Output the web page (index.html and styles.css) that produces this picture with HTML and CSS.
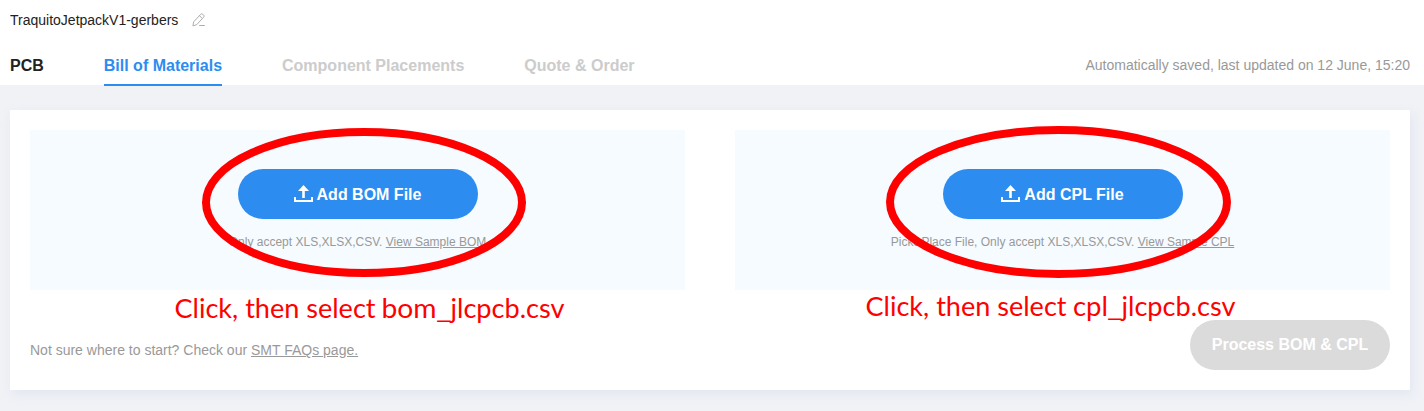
FILE: index.html
```html
<!DOCTYPE html>
<html lang="en">
<head>
<meta charset="utf-8">
<title>Bill of Materials</title>
<link rel="stylesheet" href="styles.css">
</head>
<body>
<header class="header">
  <div class="project">
    <span>TraquitoJetpackV1-gerbers</span>
    <svg class="edit-icon" width="14" height="14" viewBox="0 0 14 14" fill="none" stroke="#adadad"><path d="M.9 12.9l.8-4.1L8.7 1.3a1.5 1.5 0 0 1 2.1 0l.8.8a1.5 1.5 0 0 1 0 2.1L4.7 11.7zM7.5 2.7l2.9 2.9M7.2 12.5h5.6"/></svg>
  </div>
  <nav class="tabs">
    <a class="tab">PCB</a>
    <a class="tab tab-active">Bill of Materials</a>
    <a class="tab tab-disabled">Component Placements</a>
    <a class="tab tab-disabled">Quote &amp; Order</a>
    <span class="saved">Automatically saved, last updated on 12 June, 15:20</span>
  </nav>
</header>
<main class="card">
  <div class="uploads">
    <section class="upload">
      <button class="btn upload-btn"><svg width="19" height="17" viewBox="0 0 19 17"><path fill="#fff" d="M9.5 0L15 6h-4.2v7H8.2V6H4zM0 12h2v3h15v-3h2v5H0z"/></svg>Add BOM File</button>
      <p class="hint">Only accept XLS,XLSX,CSV. <a class="link">View Sample BOM</a></p>
    </section>
    <section class="upload">
      <button class="btn upload-btn"><svg width="19" height="17" viewBox="0 0 19 17"><path fill="#fff" d="M9.5 0L15 6h-4.2v7H8.2V6H4zM0 12h2v3h15v-3h2v5H0z"/></svg>Add CPL File</button>
      <p class="hint">Pick&amp;Place File, Only accept XLS,XLSX,CSV. <a class="link">View Sample CPL</a></p>
    </section>
  </div>
  <footer class="footer">
    <p class="faq">Not sure where to start? Check our <a class="link">SMT FAQs page.</a></p>
    <button class="btn process-btn">Process BOM &amp; CPL</button>
  </footer>
</main>
<svg class="notes" width="1424" height="411" viewBox="0 0 1424 411">
  <ellipse class="ring" cx="364" cy="202.5" rx="158" ry="70.5"/>
  <ellipse class="ring" cx="1058.5" cy="202" rx="168.5" ry="72"/>
  <g class="note">
    <text x="174.5" y="318" textLength="201" lengthAdjust="spacingAndGlyphs">Click, then select</text>
    <text x="381.5" y="318" textLength="55" lengthAdjust="spacingAndGlyphs">bom</text>
    <text x="436" y="318" textLength="16" lengthAdjust="spacingAndGlyphs">_</text>
    <text x="450.5" y="318" textLength="114" lengthAdjust="spacingAndGlyphs">jlcpcb.csv</text>
    <text x="865.5" y="316" textLength="201" lengthAdjust="spacingAndGlyphs">Click, then select</text>
    <text x="1073" y="316" textLength="35" lengthAdjust="spacingAndGlyphs">cpl</text>
    <text x="1107" y="316" textLength="16" lengthAdjust="spacingAndGlyphs">_</text>
    <text x="1121.5" y="316" textLength="114" lengthAdjust="spacingAndGlyphs">jlcpcb.csv</text>
  </g>
</svg>
</body>
</html>
```
FILE: styles.css
```css
* { box-sizing: border-box; }
body {
  margin: 0;
  height: 411px;
  overflow: hidden;
  background: #f0f2f6;
  color: #222;
  font: 14px/20px "Liberation Sans", Arial, sans-serif;
}
p { margin: 0; }
.header {
  height: 85px;
  padding: 10px 14px 0 10px;
  background: #fff;
}
.project { display: flex; gap: 14px; height: 35px; }
.edit-icon { margin-top: 3px; }
.tabs { display: flex; gap: 60px; height: 41px; }
.tab {
  height: 41px;
  font-size: 16px;
  font-weight: 700;
  line-height: 41px;
}
.tab-active { color: #2d8cf0; border-bottom: 2px solid #2d8cf0; }
.tab-disabled { color: #ccc; }
.saved { margin-left: auto; color: #999; line-height: 41px; }
.card {
  height: 280px;
  margin: 25px 14px 0 10px;
  padding: 20px;
  background: #fff;
  box-shadow: 2px 4px 10px rgba(200, 208, 226, .35);
}
.uploads { display: grid; grid-template-columns: 1fr 1fr; gap: 50px; }
.upload {
  display: flex;
  flex-direction: column;
  align-items: center;
  height: 160px;
  padding-top: 39px;
  background: #f5fbff;
}
.btn {
  display: flex;
  align-items: center;
  justify-content: center;
  height: 50px;
  padding: 0;
  border: 0;
  border-radius: 25px;
  color: #fff;
  font: 700 16px "Liberation Sans", Arial, sans-serif;
}
.upload-btn { width: 240px; gap: 4px; padding-top: 2px; background: #2d8cf0; }
.upload-btn svg { margin-bottom: 4px; }
.hint { margin-top: 13px; color: #999; font-size: 12px; }
.link { text-decoration: underline; }
.footer { display: flex; justify-content: space-between; padding-top: 30px; }
.faq { padding-top: 20px; color: #999; }
.process-btn { width: 200px; background: #dbdbdb; }
.notes { position: absolute; left: 0; top: 0; pointer-events: none; }
.ring { fill: none; stroke: #f00; stroke-width: 8; }
.note { fill: #f00; font: 26.5px Lato, sans-serif; }
```
